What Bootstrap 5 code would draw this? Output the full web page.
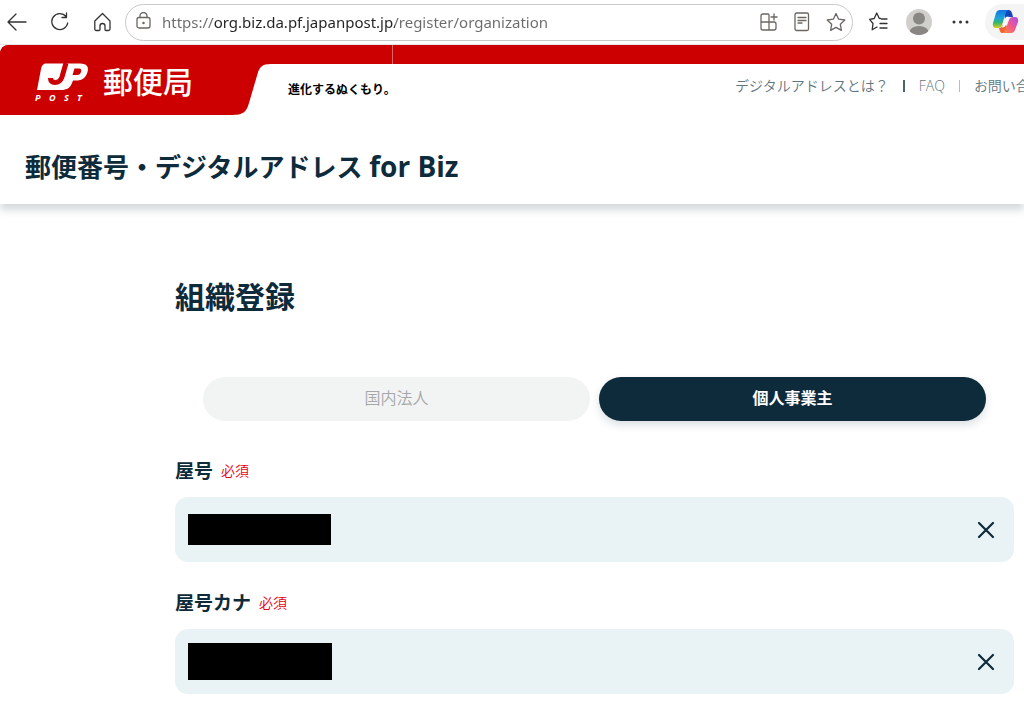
<!DOCTYPE html>
<html lang="ja">
<head>
<meta charset="utf-8">
<meta name="viewport" content="width=device-width, initial-scale=1">
<title>組織登録 | 郵便番号・デジタルアドレス for Biz</title>
<link href="https://cdn.jsdelivr.net/npm/bootstrap@5.3.0/dist/css/bootstrap.min.css" rel="stylesheet">
<style>
  :root { --navy: #0d2b3a; --post-red: #cc0000; --field: #e9f2f5; }
  body { font-family: "Open Sans", "Noto Sans CJK JP", sans-serif; color: var(--navy); background: #fff; overflow-x: hidden; }
  button { border: 0; background: none; padding: 0; color: inherit; }
  svg { display: block; }

  /* browser toolbar */
  .browser-bar { height: 45px; color: #333; border-bottom: 1px solid #e6e6e6; padding-left: 6px; }
  .line-icon { fill: none; stroke: currentColor; stroke-width: 1.3; stroke-linecap: round; stroke-linejoin: round; }
  .address { height: 37px; border: 1px solid #c9c9c9; border-radius: 19px; color: #6b6662; margin-left: 14px; padding: 0 6px 0 9px; }
  .address input {
    border: 0; outline: 0; min-width: 0; padding: 0; font: 15px/24px "Noto Sans", sans-serif;
    color: transparent; -webkit-background-clip: text; background-clip: text;
    background-image: linear-gradient(90deg, #6b6b6b 51px, #222 51px, #222 233px, #6b6b6b 233px);
  }
  .copilot { width: 39px; height: 36px; border-radius: 18px 0 0 18px; background: #f4f4f4; margin-left: 14px; padding-left: 7px; }

  /* site header */
  .site-header { height: 159px; box-shadow: 0 6px 8px #d3d9db; }
  .brand-row { height: 70px; border-top-left-radius: 9px; background: linear-gradient(var(--post-red) 19px, transparent 19px); }
  .brand { width: 288px; }
  .brand-name { font: 500 30px/40px "Noto Sans CJK JP", sans-serif; left: 103px; top: 15px; color: #fff; }
  .tagline { font-size: 12px; line-height: 20px; font-weight: 700; color: #000; padding-top: 35px; }
  .strip-mark { left: 392px; width: 1px; height: 19px; background: #dc6666; }
  .top-links { width: 289px; gap: 14px; font-size: 14px; line-height: 20px; font-weight: 350; padding: 31px 0 19px; }
  .top-links a { color: #5f7480; text-decoration: none; }
  .divider { width: 1px; height: 12px; background: #b4bec3; }
  .divider.dark { background: #4b6370; width: 2px; }
  .service-name { font-size: 26px; font-weight: 700; line-height: 40px; padding: 31px 0 0 25px; }
  .service-name span { font-size: 28px; }

  /* registration form */
  .register { padding: 73px 10px 0 175px; }
  .register h2 { font-size: 30px; font-weight: 700; line-height: 40px; }
  .kinds { gap: 9px; padding: 60px 28px 36px; }
  .kind { height: 44px; border-radius: 22px; background: #f2f4f4; color: #a5a8a9; font-size: 16px; font-weight: 350; padding-bottom: 3px; }
  .kind.chosen { background: var(--navy); color: #fff; font-weight: 700; box-shadow: 0 4px 8px #0d2b3a26; }
  .field-label { font-size: 19px; font-weight: 700; line-height: 28px; }
  .required { color: #e60012; font-size: 14px; font-weight: 350; line-height: 28px; }
  .entry { height: 65px; border-radius: 13px; background: var(--field); margin: 12px 0 27px; padding: 0 19px 0 13px; }
  .entry input { border: 0; outline: 0; background: none; min-width: 0; }
  .masked { width: 143px; height: 31px; background: #000; }
  .masked.tall { width: 144px; height: 37px; }
</style>
</head>
<body>

<div class="browser-bar d-flex align-items-center">
  <button type="button" aria-label="戻る"><svg class="line-icon" width="21" height="20"><path d="M2 10H20M10 2 2 10l8 8"/></svg></button>
  <button type="button" class="ms-4" aria-label="更新"><svg class="line-icon" width="19" height="20"><path d="M15 4.500A8 8 0 1 0 16.700 11M15.500 1v4.500H11"/></svg></button>
  <button type="button" class="ms-4" aria-label="ホーム"><svg class="line-icon" width="17" height="20"><path d="M.8 9 8.500 1.500 16 9V17q0 1.500-1.500 1.500H12q-1 0-1-1V14q0-2.500-2.500-2.500T6 14v3.500q0 1-1 1H2.300Q.8 18.500.8 17z"/></svg></button>

  <div class="address d-flex align-items-center flex-fill">
    <button type="button" class="me-2" aria-label="サイト情報"><svg class="line-icon" width="19" height="20"><rect x="2" y="5.500" width="13" height="10.500" rx="2"/><path d="M5 5.500V4a3.500 3.500 0 0 1 7 0v1.500"/><circle cx="8.500" cy="11" r=".6" fill="currentColor"/></svg></button>
    <input class="flex-fill" type="text" aria-label="アドレス" value="https://org.biz.da.pf.japanpost.jp/register/organization">
    <div class="d-flex gap-3">
      <button type="button" aria-label="アプリ"><svg class="line-icon" width="18" height="20"><path d="M8 2H3Q1 2 1 4v12q0 2 2 2h11q2 0 2-2v-4q0-2-2-2H1M8 2q1 0 1 1v15M14 2v6M11 5h6"/></svg></button>
      <button type="button" aria-label="リーダー"><svg class="line-icon" width="16" height="20"><rect x="1" y="1" width="13.500" height="17.500" rx="1.500"/><path d="M4 5.500h8M4 8.500h8M4 11h4"/></svg></button>
      <button type="button" aria-label="お気に入りに追加"><svg class="line-icon" width="20" height="20"><path d="m10 1.500 2.700 5.700 6.100.8-4.500 4.200 1.100 6.200-5.400-3-5.400 3 1.100-6.200L1.200 8l6.100-.8z"/></svg></button>
    </div>
  </div>

  <button type="button" class="ms-3" aria-label="お気に入り"><svg class="line-icon" width="19" height="20"><path d="M11.500 6.500 10.200 6.300 7.700 1 5.200 6.500 0.600 7.300 4 11.500 3.200 17.800 8 15M12.500 7H18M11 11.500h7M11 16h7"/></svg></button>
  <button type="button" class="ms-3" aria-label="プロフィール"><svg width="28" height="28"><clipPath id="face"><circle cx="15" cy="14" r="13"/></clipPath><g clip-path="url(#face)"><path fill="#d0cfcb" d="M0 0h28v28H0z"/><circle cx="15" cy="10.500" r="6" fill="#8a8683"/><ellipse cx="15" cy="24" rx="9.500" ry="6" fill="#8a8683"/></g></svg></button>
  <button type="button" class="ms-3" aria-label="設定など"><svg width="23" height="20" fill="#333"><circle cx="6" cy="10" r="1.500"/><circle cx="12.500" cy="10" r="1.500"/><circle cx="19" cy="10" r="1.500"/></svg></button>
  <button type="button" class="copilot" aria-label="Copilot">
    <svg width="27" height="26" viewBox="0 0 27 26">
      <defs>
        <linearGradient id="cool" x1="0" y1="0" x2="0" y2="1"><stop offset="0" stop-color="#1672df"/><stop offset=".45" stop-color="#19a5dd"/><stop offset=".7" stop-color="#35b568"/><stop offset="1" stop-color="#d9cc21"/></linearGradient>
        <linearGradient id="warm" x1="1" y1="0" x2="0" y2="1"><stop offset="0" stop-color="#a64df0"/><stop offset=".5" stop-color="#f0578f"/><stop offset="1" stop-color="#fb8b38"/></linearGradient>
      </defs>
      <path fill="#1546b8" d="M12 1h5q2 0 3 3l1 4h-5q-2 0-3 3z"/>
      <path fill="url(#cool)" d="M8 1h8q-2 1-3 5l-3 10q-1 3-4 3H4q-4 0-3-5L4 4Q5 1 8 1z"/>
      <path fill="#f0642f" d="M7 19q3 0 4-4l4 2-2 7h-3q-2 0-3-5z"/>
      <path fill="url(#warm)" d="M19 24h-8q2-1 3-5l3-8q1-3 4-3h2q4 0 3 5l-3 8q-1 3-4 3z"/>
      <path fill="#fff" d="M13.500 8.500q1-1 3-1L13 17.500q-1 1-3 1z"/>
    </svg>
  </button>
</div>

<header class="site-header">
  <div class="brand-row d-flex position-relative">
    <span class="strip-mark position-absolute top-0"></span>
    <a href="#" class="brand position-relative flex-shrink-0">
      <svg width="275" height="70" viewBox="0 0 275 70" aria-label="JP POST">
        <path fill="#c00" d="M0 9Q0 0 9 0H275V19H271C262 19 259.500 22 257.500 29L249 58C246.500 67 243 70 232 70H0z"/>
        <path fill="#fff" d="M46 18.500H80C87 18.500 89 22 87.500 27 86 33 82 35.500 76 35.500H73L72 38C70 43 67 45 61 45H37L41 24Q42 18.500 46 18.500z"/>
        <path fill="none" stroke="#c00" stroke-width="5" d="M66 18 62 32Q60 37.500 55 37.500 50.500 37.500 50.500 33"/>
        <path fill="#c00" d="M74.500 23.500H79Q82 23.500 81 27 80.200 30 77 30H72.500z"/>
        <text x="35" y="56" fill="#fff" font-family="Open Sans, sans-serif" font-size="9" font-weight="700" font-style="italic"><tspan>P</tspan><tspan x="49">O</tspan><tspan x="64">S</tspan><tspan x="77">T</tspan></text>
      </svg>
      <span class="brand-name position-absolute">郵便局</span>
    </a>
    <span class="tagline text-nowrap">進化するぬくもり。</span>
    <nav class="top-links d-flex align-items-center ms-auto overflow-hidden text-nowrap flex-shrink-0">
      <a href="#">デジタルアドレスとは？</a>
      <span class="divider dark flex-shrink-0"></span>
      <a href="#">FAQ</a>
      <span class="divider flex-shrink-0"></span>
      <a href="#">お問い合わせ</a>
    </nav>
  </div>
  <h1 class="service-name mb-0">郵便番号・デジタルアドレス <span>for Biz</span></h1>
</header>

<main class="register">
  <h2 class="mb-0">組織登録</h2>
  <form>
    <div class="kinds d-flex">
      <button type="button" class="kind flex-fill w-50">国内法人</button>
      <button type="button" class="kind chosen flex-fill w-50">個人事業主</button>
    </div>

    <div class="d-flex align-items-center gap-2">
      <label class="field-label" for="trade-name">屋号</label><span class="required">必須</span>
    </div>
    <div class="entry d-flex align-items-center">
      <span class="masked"></span>
      <input class="flex-fill" type="text" id="trade-name">
      <button type="button" aria-label="屋号を消去"><svg width="18" height="18" fill="none" stroke="#0d2b3a" stroke-width="2.200" stroke-linecap="round"><path d="m2 2 14 14M16 2 2 16"/></svg></button>
    </div>

    <div class="d-flex align-items-center gap-2">
      <label class="field-label" for="trade-kana">屋号カナ</label><span class="required">必須</span>
    </div>
    <div class="entry d-flex align-items-center mb-0">
      <span class="masked tall"></span>
      <input class="flex-fill" type="text" id="trade-kana">
      <button type="button" aria-label="屋号カナを消去"><svg width="18" height="18" fill="none" stroke="#0d2b3a" stroke-width="2.200" stroke-linecap="round"><path d="m2 2 14 14M16 2 2 16"/></svg></button>
    </div>
  </form>
</main>

<script src="https://cdn.jsdelivr.net/npm/bootstrap@5.3.0/dist/js/bootstrap.bundle.min.js"></script>
</body>
</html>
